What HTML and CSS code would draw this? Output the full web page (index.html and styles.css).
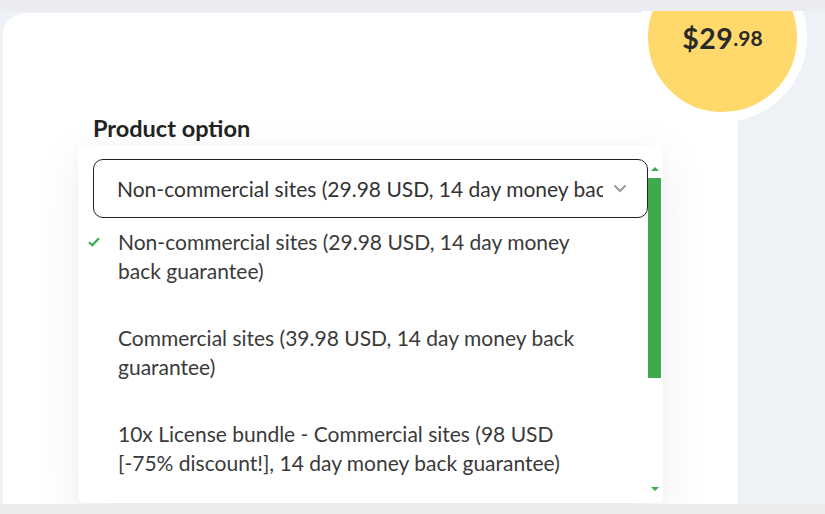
FILE: index.html
```html
<!DOCTYPE html>
<html>
<head>
<meta charset="utf-8">
<link rel="stylesheet" href="styles.css">
</head>
<body>
<div class="topbar"></div>
<div class="main">
  <div class="card">
    <div class="label">Product option</div>
    <div class="panel">
      <div class="scroll-area">
        <div class="select-wrap">
          <div class="select">
            <span class="select-text">Non-commercial sites (29.98 USD, 14 day money back guarantee)</span>
            <svg class="chevron" width="14" height="9" viewBox="0 0 14 9"><path d="M1.5 1.5 L7 7 L12.5 1.5" fill="none" stroke="#9a9a9a" stroke-width="2"/></svg>
          </div>
        </div>
        <ul class="options">
          <li class="option selected">
            <svg class="check" width="12" height="10" viewBox="0 0 12 10"><path d="M1 5.2 L4.3 8.3 L11 1.3" fill="none" stroke="#3daa4d" stroke-width="2.2"/></svg>
            Non-commercial sites (29.98 USD, 14 day money back guarantee)
          </li>
          <li class="option">Commercial sites (39.98 USD, 14 day money back guarantee)</li>
          <li class="option">10x License bundle - Commercial sites (98 USD [-75% discount!], 14 day money back guarantee)</li>
        </ul>
      </div>
      <div class="scrollbar">
        <div class="arrow up"></div>
        <div class="thumb"></div>
        <div class="track"></div>
        <div class="arrow down"></div>
      </div>
    </div>
  </div>
  <div class="price-badge">
    <span class="price-main">$29</span><span class="price-cents">.98</span>
  </div>
</div>
<div class="bottombar"></div>
</body>
</html>
```

FILE: styles.css
```css
* { box-sizing: border-box; }
html, body {
  margin: 0;
  padding: 0;
  height: 100%;
  overflow: hidden;
}
body {
  background: #eef1f6;
  font-family: Lato, "Noto Sans", sans-serif;
  color: #333;
}
.topbar {
  height: 11px;
  background: #eaecef;
}
.bottombar {
  height: 10px;
  background: #ebecee;
}
.main {
  position: relative;
  padding: 2px 0 0 3px;
  height: 493px;
  overflow: hidden;
}
.card {
  width: 735px;
  height: 600px;
  background: #fff;
  border-top-left-radius: 22px;
  padding: 102px 0 0 75px;
}
.label {
  font-weight: 700;
  font-size: 23.5px;
  line-height: 27px;
  color: #222;
  padding-left: 15px;
  margin-bottom: 3px;
}
.panel {
  width: 585px;
  height: 358px;
  background: #fff;
  border-radius: 6px;
  box-shadow: 0 14px 50px rgba(0, 0, 0, 0.07), 0 2px 10px rgba(0, 0, 0, 0.03);
  display: flex;
  overflow: hidden;
}
.scroll-area {
  flex: 1;
  min-width: 0;
}
.select-wrap {
  padding: 14px 0 0 15px;
}
.select {
  height: 59px;
  border: 1px solid #222;
  border-radius: 10px;
  display: flex;
  align-items: center;
  padding: 0 20px 0 23px;
  gap: 10px;
}
.select-text {
  flex: 1;
  min-width: 0;
  white-space: nowrap;
  overflow: hidden;
  font-size: 21px;
  color: #333;
}
.chevron { flex: none; }
.options {
  list-style: none;
  margin: 0;
  padding: 0;
}
.option {
  position: relative;
  font-size: 21px;
  line-height: 29px;
  color: #3a3a3a;
  padding: 19px 60px 19px 40px;
}
.option.selected { padding-top: 9px; }
.check {
  position: absolute;
  left: 10px;
  top: 19px;
}
.scrollbar {
  width: 13px;
  margin: 15px 2px 0 0;
  display: flex;
  flex-direction: column;
  padding-bottom: 5px;
}
.arrow {
  height: 18px;
  display: flex;
  justify-content: center;
  align-items: center;
}
.arrow::before {
  content: "";
  border-left: 4px solid transparent;
  border-right: 4px solid transparent;
}
.arrow.up::before { border-bottom: 4px solid #3daa4d; }
.arrow.down::before { border-top: 4px solid #3daa4d; }
.thumb {
  height: 200px;
  background: #3daa4d;
}
.track { flex: 1; }
.price-badge {
  position: absolute;
  left: 638px;
  top: -58px;
  width: 169px;
  height: 169px;
  border-radius: 50%;
  background: #ffd96b;
  border: 10px solid #fff;
  display: flex;
  align-items: center;
  justify-content: center;
  color: #2a2a2a;
  font-weight: 700;
}
.price-main { font-size: 28.5px; letter-spacing: 0.5px; }
.price-cents { font-size: 21px; }
```
